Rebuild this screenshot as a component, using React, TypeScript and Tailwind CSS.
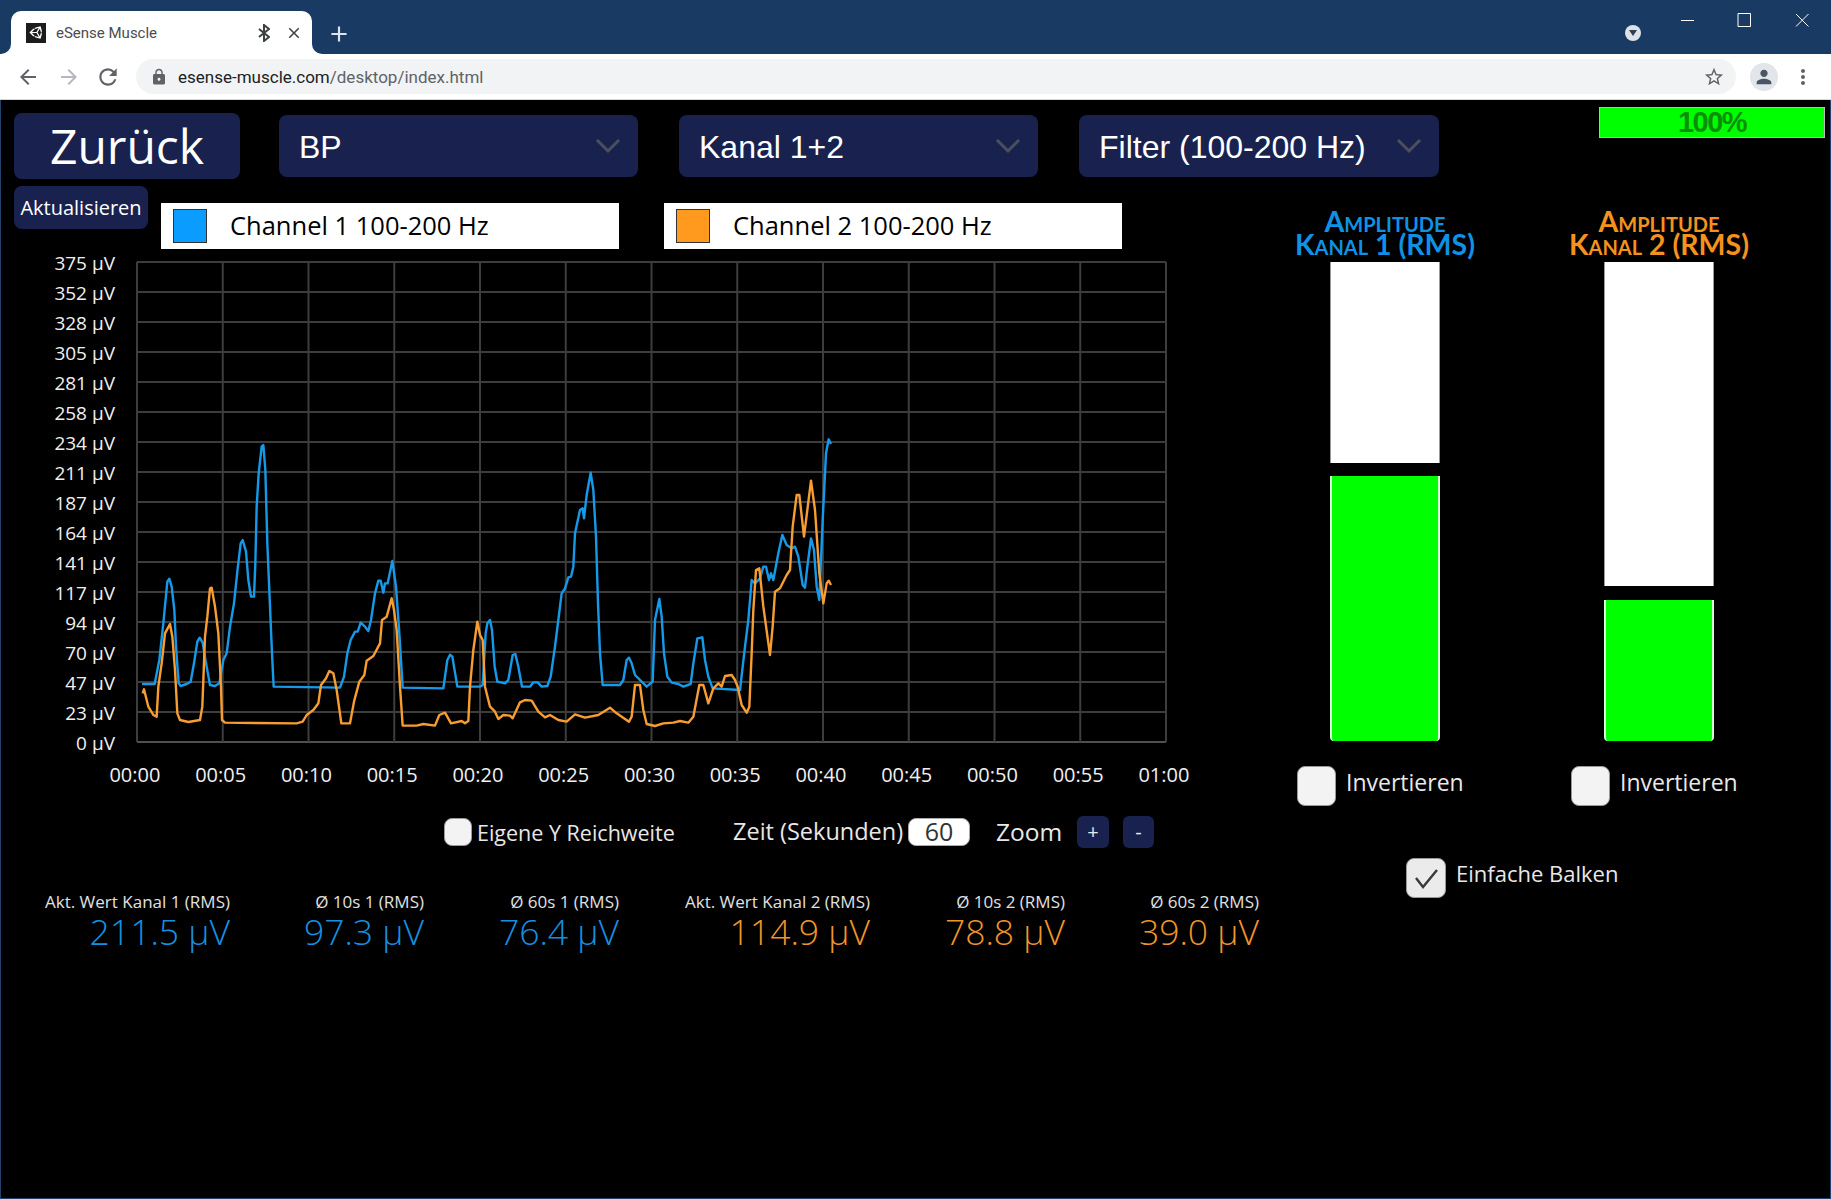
import { MdAdd, MdArrowBack, MdArrowForward, MdClose, MdLock, MdMoreVert, MdPerson, MdRefresh, MdStarBorder } from "react-icons/md";
import { FaUnity } from "react-icons/fa";

const YS = ["375", "352", "328", "305", "281", "258", "234", "211", "187", "164", "141", "117", "94", "70", "47", "23", "0"];
const XS = ["00:00", "00:05", "00:10", "00:15", "00:20", "00:25", "00:30", "00:35", "00:40", "00:45", "00:50", "00:55", "01:00"];

// traced from the chart, [x, y] in 3x crop units
const BLUE_A = [[66,792],[104,792],[118,720],[130,610],[142,485],[148,476],[155,500],[163,570],[168,680],[176,790],[182,798],[200,792],[212,785],[222,730],[232,665],[239,653],[248,668],[258,730],[270,795],[285,798],[298,790],[310,720],[320,700],[330,620],[342,550],[352,455],[362,370],[368,360],[378,395],[385,480],[393,530],[402,530],[406,430],[410,260],[416,160],[425,80],[430,75],[436,150],[442,370],[450,560],[456,700],[461,800],[660,803],[672,770],[682,700],[692,660],[705,635],[713,635],[722,608],[735,620],[745,633],[753,600],[765,520],[775,482],[782,482],[790,518],[795,490],[803,490],[817,423],[828,500],[838,640],[848,803],[970,805],[982,720],[990,704],[997,710],[1012,800],[1080,800]];
const BLUE_B = [[38,795],[47,640],[52,610],[60,600],[66,630],[74,740],[82,785],[105,790],[115,780],[128,705],[136,702],[145,740],[156,800],[180,800],[190,787],[203,787],[215,800],[232,798],[242,770],[255,680],[265,600],[275,520],[285,505],[295,472],[303,470],[310,440],[315,340],[330,270],[338,265],[342,295],[350,225],[362,158],[370,210],[378,350],[384,550],[390,700],[398,795],[450,795],[460,780],[470,720],[477,713],[485,730],[495,765],[515,785],[530,800],[548,785],[555,600],[568,537],[575,590],[582,700],[592,770],[605,788],[625,792],[640,800],[662,792],[670,730],[682,655],[697,652],[705,720],[715,770],[728,805],[810,810],[825,680],[835,600],[845,480],[855,490],[870,475],[880,440],[888,440],[897,480],[903,460],[910,480],[925,400],[937,345],[950,375],[965,385],[975,380],[985,410],[998,495],[1005,503],[1012,440],[1023,355],[1032,390],[1040,500],[1048,540],[1058,300],[1068,100],[1076,58],[1083,72]];
const ORANGE_A = [[68,820],[72,808],[85,860],[100,885],[110,890],[115,800],[125,730],[135,640],[143,625],[150,612],[157,650],[165,750],[172,880],[180,900],[205,906],[240,900],[247,860],[255,650],[262,590],[270,505],[275,503],[285,560],[295,640],[303,800],[306,900],[315,908],[530,910],[548,905],[560,885],[580,870],[595,850],[603,795],[618,775],[628,753],[640,760],[650,810],[664,910],[690,910],[702,845],[718,785],[733,765],[740,722],[760,708],[780,670],[786,600],[800,590],[815,535],[822,570],[830,630],[840,800],[848,917],[890,917],[910,912],[945,917],[958,885],[975,878],[993,910],[1025,903],[1035,910],[1045,903],[1050,800],[1060,690]];
const ORANGE_B = [[22,605],[30,645],[38,660],[45,800],[60,860],[75,875],[85,897],[100,885],[120,887],[128,895],[150,847],[165,840],[185,842],[205,875],[225,892],[240,885],[265,900],[290,905],[315,883],[345,893],[385,885],[420,863],[440,880],[477,905],[485,890],[495,795],[510,795],[520,870],[530,912],[555,918],[580,910],[610,908],[630,903],[655,908],[670,890],[688,795],[700,795],[715,850],[730,805],[745,790],[755,800],[765,768],[785,765],[795,780],[803,800],[815,855],[830,878],[838,860],[845,700],[850,570],[858,450],[868,445],[880,560],[900,705],[908,620],[915,515],[930,505],[950,465],[960,450],[968,320],[980,225],[988,225],[1002,350],[1012,270],[1023,182],[1035,270],[1048,460],[1060,550],[1070,490],[1076,482],[1083,495]];

function toPoints(a: number[][], b: number[][]) {
  const first = a.map(([x, y]) => `${120 + x / 3},${420 + y / 3}`);
  const second = b.map(([x, y]) => `${470 + x / 3},${420 + y / 3}`);
  return [...first, ...second].join(" ");
}

function Dropdown({ label, className }: { label: string; className: string }) {
  return (
    <div className={`flex h-[62px] items-center rounded-lg bg-[#19224f] pl-5 font-['Liberation_Sans',sans-serif] text-[32px] text-white ${className}`}>
      <span className="flex-1 whitespace-nowrap pt-0.5">{label}</span>
      <svg className="mr-[17px] h-[16px] w-[26px]" viewBox="0 0 26 16" fill="none" stroke="#4c4f5e" strokeWidth="3">
        <path d="M2 2l11 11L24 2" />
      </svg>
    </div>
  );
}

function Legend({ label, swatch, className }: { label: string; swatch: string; className: string }) {
  return (
    <div className={`mt-[17px] flex h-[46px] items-center bg-white pl-3 text-[25.5px] text-black ${className}`}>
      <span className={`h-[34px] w-[34px] border border-[#333] ${swatch}`} />
      <span className="ml-[23px] whitespace-nowrap pb-0.5">{label}</span>
    </div>
  );
}

function Checkbox({ className, checked }: { className: string; checked?: boolean }) {
  return (
    <span className={`flex shrink-0 items-center justify-center rounded-lg border border-[#999] ${checked ? "bg-[#ebebeb]" : "bg-[#f3f3f3]"} ${className}`}>
      {checked && (
        <svg className="h-[26px] w-[26px]" viewBox="0 0 26 26" fill="none" stroke="#3a3a3a" strokeWidth="2.4">
          <path d="M3 13l7 9L24 5" />
        </svg>
      )}
    </span>
  );
}

function Stat({ label, value, color, className }: { label: string; value: string; color: string; className: string }) {
  return (
    <div className={`text-right ${className}`}>
      <div className="h-6 whitespace-nowrap text-[17px] leading-6 text-[#e0e0e0]">{label}</div>
      <div className={`h-[38px] whitespace-nowrap text-[35.5px] font-light leading-[34px] ${color}`}>{value}</div>
    </div>
  );
}

function Gauge({ line2, color, whiteH, greenH }: { line2: string; color: string; whiteH: string; greenH: string }) {
  return (
    <div className="w-[250px]">
      <div className={`mt-6 text-center font-['Lato',sans-serif] text-[28.5px] font-bold leading-[23px] whitespace-nowrap [font-variant:small-caps] ${color}`}>
        Amplitude
        <br />
        {line2}
      </div>
      <div className="ml-[70px] mt-1.5 flex h-[479px] w-[110px] flex-col justify-between">
        <div className={`border-x border-[#999] bg-white ${whiteH}`} />
        <div className={`rounded-b-sm border-x-2 border-[#d8ffd8] bg-[#00ff00] ${greenH}`} />
      </div>
      <div className="mt-[25px] flex h-10 items-center pl-[37px]">
        <Checkbox className="h-10 w-[39px]" />
        <span className="ml-2.5 pb-[7px] text-[23px] text-[#e8e8e8]">Invertieren</span>
      </div>
    </div>
  );
}

export default function App() {
  return (
    <div className="flex h-screen w-full flex-col overflow-hidden bg-black font-['Open_Sans',sans-serif] text-white">
      {/* tab strip */}
      <div className="flex h-[54px] shrink-0 items-end bg-[#183a63]">
        <div className="relative ml-[11px] flex h-[43px] w-[301px] items-center rounded-t-[10px] bg-white">
          <span className="absolute -left-[10px] bottom-0 h-[10px] w-[10px] bg-white">
            <span className="block h-full w-full rounded-br-[10px] bg-[#183a63]" />
          </span>
          <span className="absolute -right-[10px] bottom-0 h-[10px] w-[10px] bg-white">
            <span className="block h-full w-full rounded-bl-[10px] bg-[#183a63]" />
          </span>
          <span className="ml-[15px] flex h-5 w-5 items-center justify-center bg-[#1c1c1e]">
            <FaUnity className="h-[15px] w-[15px] text-white" />
          </span>
          <span className="ml-2.5 pt-0.5 font-['Roboto',sans-serif] text-[15px] text-[#4b4d50]">eSense Muscle</span>
          <svg className="ml-auto h-[18px] w-3" viewBox="0 0 12 18" fill="none" stroke="#3c4043" strokeWidth="2">
            <path d="M1 5l10 8-5 4V1l5 4-10 8" />
          </svg>
          <MdClose className="ml-[15px] mr-[9px] h-[18px] w-[18px] text-[#3c4043]" />
        </div>
        <MdAdd className="mb-[7px] ml-[14px] h-[26px] w-[26px] text-[#dfe4ea]" />
        <div className="relative ml-auto h-full w-[206px]">
          <span className="absolute left-0 top-[25px] flex h-4 w-4 items-center justify-center rounded-full bg-[#dee1e6]">
            <span className="h-0 w-0 border-x-[4px] border-t-[6px] border-x-transparent border-t-[#2c3f5a]" />
          </span>
          <svg className="absolute left-[56px] top-[12px] h-[16px] w-[130px]" viewBox="0 0 130 16" fill="none" stroke="#fff" strokeWidth="1">
            <path d="M0 8.5h13M57 1.5h12.5v13H57zM115 2l12.5 12.5M127.5 2L115 14.5" />
          </svg>
        </div>
      </div>

      {/* toolbar */}
      <div className="flex h-[46px] shrink-0 items-center border-b border-[#d8d8d8] bg-white">
        <MdArrowBack className="ml-4 h-6 w-6 text-[#5f6368]" />
        <MdArrowForward className="ml-[17px] h-6 w-6 text-[#b5b8bc]" />
        <MdRefresh className="ml-[14px] h-[26px] w-[26px] text-[#5f6368]" />
        <div className="ml-[15px] flex h-[35px] flex-1 items-center rounded-full bg-[#f1f3f4]">
          <MdLock className="ml-[14px] h-[18px] w-[18px] text-[#5f6368]" />
          <span className="ml-[10px] pt-0.5 font-['Roboto',sans-serif] text-[17px] text-[#202124]">
            esense-muscle.com<span className="text-[#5f6368]">/desktop/index.html</span>
          </span>
          <MdStarBorder className="ml-auto mr-[11px] h-[22px] w-[22px] text-[#5f6368]" />
        </div>
        <span className="ml-[14px] flex h-7 w-7 items-center justify-center rounded-full bg-[#e2e5ea]">
          <MdPerson className="h-[22px] w-[22px] text-[#4b5563]" />
        </span>
        <MdMoreVert className="ml-[13px] mr-4 h-6 w-6 text-[#5f6368]" />
      </div>

      <main className="flex-1 border-x border-b border-[#24406b]">
        {/* top row */}
        <div className="flex h-[86px] items-start">
          <button className="ml-[13px] mt-[13px] h-[66px] w-[226px] rounded-lg bg-[#19224f] text-[48px] leading-none">Zurück</button>
          <Dropdown label="BP" className="ml-[39px] mt-[15px] w-[359px]" />
          <Dropdown label="Kanal 1+2" className="ml-[41px] mt-[15px] w-[359px]" />
          <Dropdown label="Filter (100-200 Hz)" className="ml-[41px] mt-[15px] w-[360px]" />
          <div className="ml-auto mr-[5px] mt-[7px] flex h-[31px] w-[226px] items-center justify-center border border-[#bbb] bg-[#00ff00] font-['Liberation_Sans',sans-serif] text-[29px] font-bold tracking-[-1.5px] text-[#0a8f0a]">
            100%
          </div>
        </div>

        <div className="flex items-start">
          {/* left column */}
          <div className="w-[1259px] shrink-0">
            <div className="flex h-[63px] items-start">
              <button className="ml-[13px] h-[43px] w-[134px] rounded-lg bg-[#19224f] text-[20px]">Aktualisieren</button>
              <Legend label="Channel 1 100-200 Hz" swatch="bg-[#0a9cff]" className="ml-[13px] w-[458px]" />
              <Legend label="Channel 2 100-200 Hz" swatch="bg-[#ff9a1f]" className="ml-[45px] w-[458px]" />
            </div>

            <div className="flex">
              <div className="w-[114px] shrink-0 text-right text-[19px] leading-[28px] text-[#f0f0f0]">
                {YS.map((v) => (
                  <div key={v} className="h-[30px] whitespace-nowrap">{v} µV</div>
                ))}
              </div>
              <svg className="h-[510px] w-[1052px] shrink-0" viewBox="115 249 1052 510" fill="none">
                {Array.from({ length: 17 }, (_, i) => (
                  <path key={i} d={`M137 ${262 + i * 30}H1166`} stroke={i === 16 ? "#505050" : "#3d3d3d"} strokeWidth="2" />
                ))}
                {Array.from({ length: 13 }, (_, i) => (
                  <path key={i} d={`M${137 + i * 85.75} 262V742`} stroke="#3d3d3d" strokeWidth="2" />
                ))}
                <polyline points={toPoints(BLUE_A, BLUE_B)} stroke="#159ae9" strokeWidth="2.4" strokeLinejoin="round" />
                <polyline points={toPoints(ORANGE_A, ORANGE_B)} stroke="#f79d31" strokeWidth="2.4" strokeLinejoin="round" />
              </svg>
            </div>

            <div className="ml-[91px] mt-px flex h-[30px] text-[20px] leading-[30px] text-[#f0f0f0]">
              {XS.map((t) => (
                <div key={t} className="w-[85.75px] shrink-0 text-center">{t}</div>
              ))}
            </div>

            <div className="ml-[443px] mt-[26px] flex h-8 items-center text-[23.5px] text-[#e8e8e8]">
              <Checkbox className="h-7 w-7" />
              <span className="ml-[5px] w-[198px] whitespace-nowrap pt-0.5 text-[21.5px]">Eigene Y Reichweite</span>
              <span className="ml-[58px] w-[171px] whitespace-nowrap">Zeit (Sekunden)</span>
              <span className="ml-1 flex h-7 w-[62px] items-center justify-center rounded-lg border border-[#aaa] bg-white text-[25px] text-[#333]">60</span>
              <span className="ml-[26px] w-[66px] text-[24.5px]">Zoom</span>
              <button className="ml-[15px] h-8 w-8 rounded-md bg-[#19224f] text-[20px] leading-none">+</button>
              <button className="ml-[14px] h-8 w-[31px] rounded-md bg-[#19224f] text-[20px] leading-none">-</button>
            </div>

            <div className="mt-[42px] flex">
              <Stat label="Akt. Wert Kanal 1 (RMS)" value="211.5 µV" color="text-[#1590e0]" className="w-[229px]" />
              <Stat label="Ø 10s 1 (RMS)" value="97.3 µV" color="text-[#1590e0]" className="w-[194px]" />
              <Stat label="Ø 60s 1 (RMS)" value="76.4 µV" color="text-[#1590e0]" className="w-[195px]" />
              <Stat label="Akt. Wert Kanal 2 (RMS)" value="114.9 µV" color="text-[#f0952a]" className="w-[251px]" />
              <Stat label="Ø 10s 2 (RMS)" value="78.8 µV" color="text-[#f0952a]" className="w-[195px]" />
              <Stat label="Ø 60s 2 (RMS)" value="39.0 µV" color="text-[#f0952a]" className="w-[194px]" />
            </div>
          </div>

          {/* right column */}
          <div>
            <div className="flex gap-6">
              <Gauge line2="Kanal 1 (RMS)" color="text-[#0f92e6]" whiteH="h-[201px]" greenH="h-[265px]" />
              <Gauge line2="Kanal 2 (RMS)" color="text-[#f5921e]" whiteH="h-[324px]" greenH="h-[141px]" />
            </div>
            <div className="ml-[146px] mt-[52px] flex h-10 items-center">
              <Checkbox className="h-10 w-10" checked />
              <span className="ml-2.5 whitespace-nowrap pb-[10px] text-[22px] text-[#e8e8e8]">Einfache Balken</span>
            </div>
          </div>
        </div>
      </main>
    </div>
  );
}
